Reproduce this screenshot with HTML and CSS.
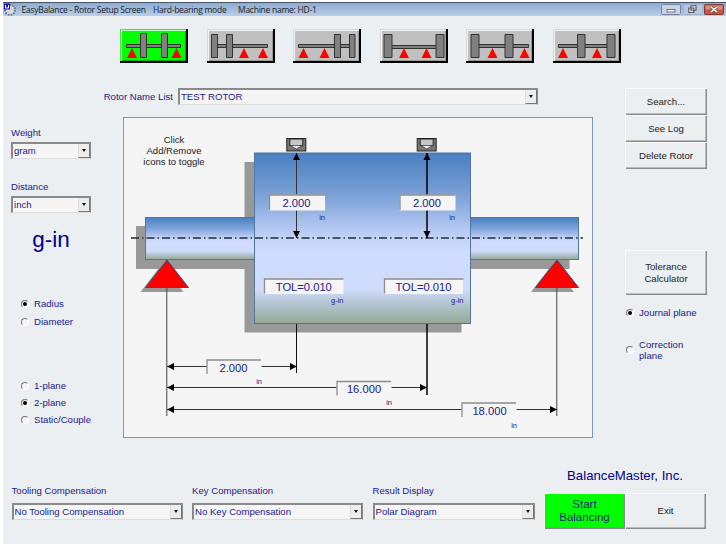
FILE: index.html
```
<!DOCTYPE html>
<html lang="en">
<head>
<meta charset="utf-8">
<title>EasyBalance - Rotor Setup Screen</title>
<link rel="stylesheet" href="styles.css">
</head>
<body>
<div class="window">
  <header class="titlebar">
    <svg class="app-icon" width="14" height="14" viewBox="0 0 14 14"><circle cx="7" cy="7" r="5" fill="#d4d8de" stroke="#5f6672" stroke-width="1.8" stroke-dasharray="1.5 1.3"/><rect x="1" y="0.5" width="6" height="6" fill="#1414b8"/><path d="M2.500 2v3h3v-3" fill="none" stroke="#fff"/></svg>
    <span class="t1">EasyBalance - Rotor Setup Screen</span>
    <span class="t2">Hard-bearing mode</span>
    <span class="t3">Machine name: HD-1</span>
    <div class="winbtns">
      <svg width="20" height="11" viewBox="0 0 20 11"><rect class="wb" x=".5" y=".5" width="19" height="10" rx="1"/><rect x="6" y="5.5" width="8" height="2.5" fill="#fff" stroke="#555" stroke-width=".8"/></svg>
      <svg width="20" height="11" viewBox="0 0 20 11"><rect class="wb faint" x=".5" y=".5" width="19" height="10" rx="1"/><path d="M8 1.8h5v4.500h-5zM5.800 4h5v4.500h-5z" fill="#e4eaf2" stroke="#555" stroke-width="1.1"/></svg>
      <svg width="20" height="11" viewBox="0 0 20 11"><rect x=".5" y=".5" width="19" height="10" rx="1" fill="#cb5540" stroke="#7c3b38"/><rect x="1.5" y="1.5" width="17" height="4" fill="#dc8c7c"/><path d="M7 3l6 5M13 3l-6 5" stroke="#694a4a" stroke-width="3"/><path d="M7 3l6 5M13 3l-6 5" stroke="#fff" stroke-width="1.6"/></svg>
    </div>
  </header>

  <nav class="configs">
    <button class="cfg on"><svg viewBox="0 0 68 34"><path class="s" d="M6.500 15.500h54v3h-54z"/><path class="d" d="M20.500 4.500h6v24h-6zM41.500 4.500h6v24h-6z"/><path class="t" d="M7 29h10l-5-10zM51.500 29h10l-5-10z"/></svg></button>
    <button class="cfg"><svg viewBox="0 0 68 34"><path class="s" d="M8 15.500h52.500v3h-52.500z"/><path class="d" d="M4.500 5.500h6v23h-6zM19.500 5.500h6v23h-6z"/><path class="t" d="M32 29h10l-5-10zM51 29h10l-5-10z"/></svg></button>
    <button class="cfg"><svg viewBox="0 0 68 34"><path class="s" d="M5.500 15.500h52v3h-52z"/><path class="d" d="M41.500 5.500h6v23h-6zM56.500 5.500h5.500v23h-5.500z"/><path class="t" d="M5.500 29h10l-5-10zM26.500 29h10l-5-10z"/></svg></button>
    <button class="cfg"><svg viewBox="0 0 68 34"><path class="s" d="M10 16.500h48v3h-48z"/><path class="d" d="M4 5.500h8v23h-8zM56 5.500h8v23h-8z"/><path class="t" d="M19 29h10l-5-10zM41.500 29h10l-5-10z"/></svg></button>
    <button class="cfg"><svg viewBox="0 0 68 34"><path class="s" d="M10 15.500h52.500v3h-52.500z"/><path class="d" d="M5 5.500h8v23h-8zM39 5.500h8v23h-8z"/><path class="t" d="M21.500 29h10l-5-10zM53.500 29h10l-5-10z"/></svg></button>
    <button class="cfg"><svg viewBox="0 0 68 34"><path class="s" d="M5.500 15.500h52v3h-52z"/><path class="d" d="M24.500 5.500h7.500v23h-7.500zM54 5.500h8v23h-8z"/><path class="t" d="M5 29h10l-5-10zM39 29h10l-5-10z"/></svg></button>
  </nav>

  <main class="main">
    <aside class="left">
      <label class="lbl">Weight</label>
      <div class="select"><span>gram</span><i></i></div>
      <label class="lbl second">Distance</label>
      <div class="select"><span>inch</span><i></i></div>
      <div class="unit">g-in</div>
      <div class="radios shape">
        <div class="radio on"><b></b>Radius</div>
        <div class="radio"><b></b>Diameter</div>
      </div>
      <div class="radios planes">
        <div class="radio"><b></b>1-plane</div>
        <div class="radio on"><b></b>2-plane</div>
        <div class="radio"><b></b>Static/Couple</div>
      </div>
    </aside>

    <section class="center">
      <div class="rotor-row">
        <label class="lbl">Rotor Name List</label>
        <div class="select"><span>TEST ROTOR</span><i></i></div>
      </div>
      <svg class="diagram" width="470" height="322" viewBox="123 117 470 322">
        <defs>
          <linearGradient id="metal" x1="0" y1="0" x2="0" y2="1">
            <stop offset="0" stop-color="#4a7fc0"/><stop offset=".25" stop-color="#7ba1d8"/><stop offset=".5" stop-color="#c4d3f8"/><stop offset=".58" stop-color="#d0dcff"/><stop offset=".8" stop-color="#cfdbfb"/><stop offset="1" stop-color="#93a896"/>
          </linearGradient>
          <filter id="soft"><feGaussianBlur stdDeviation=".7"/></filter>
          <marker id="arr" viewBox="0 0 8 8" refX="8" refY="4" markerWidth="8" markerHeight="8" markerUnits="userSpaceOnUse" orient="auto-start-reverse"><path d="M1 .5L8 4L1 7.500z"/></marker>
          <g id="sensor"><rect x=".5" y=".5" width="19" height="12.500" fill="#777" stroke="#222"/><path d="M3.500 1v6.500h3l3.500 3l3.500-3h3v-6.500z" fill="#c6c6c6" stroke="#222"/><path d="M4 7.500h12l-6 3.500z" fill="#eee" stroke="#333" stroke-width=".7"/></g>
        </defs>
        <rect x="123.500" y="117.500" width="469" height="320" fill="#f5f5f5" stroke="#7c96b9"/>
        <g class="lab"><text x="174" y="142.500">Click</text><text x="174" y="153.800">Add/Remove</text><text x="174" y="165">icons to toggle</text></g>
        <g fill="#999" filter="url(#soft)">
          <path d="M136 226h110v43h-110zM460 226h109.500v43h-109.500zM244.500 162h217v170.500h-217z"/>
          <path d="M162 264l21.500 28h-43zM552.500 264l21.500 28h-43z"/>
        </g>
        <g fill="url(#metal)" stroke="#4f76a5">
          <rect x="145.500" y="217.500" width="109" height="42"/><rect x="470.500" y="217.500" width="108" height="42"/>
          <rect x="254.500" y="153" width="216" height="170.500"/>
        </g>
        <path d="M131 238H583" stroke="#222b3a" stroke-width="1.500" stroke-dasharray="8 3 1.500 3" fill="none"/>
        <g fill="#f00" stroke="#334c78"><path d="M167 260l21.500 27.500h-43z"/><path d="M557 260l21.500 27.500h-43z"/></g>
        <use href="#sensor" x="286.300" y="138"/><use href="#sensor" x="416.700" y="138"/>
        <g stroke="#444" fill="none"><path d="M166.800 288V416M556.800 288V416"/><path d="M296.500 324V373" stroke="#111"/><path d="M427 324V395" stroke="#000" stroke-width="1.500"/></g>
        <g class="dim">
          <path d="M296.500 153V238"/>
          <path d="M427 153V238" stroke="#000" stroke-width="1.500"/>
          <path d="M167 366.500H297"/>
          <path d="M167 387.500H427"/>
          <path d="M167 409.500H557"/>
        </g>
        <g class="box">
          <rect x="269" y="194.500" width="56" height="16"/><rect x="399.500" y="194.500" width="56" height="16"/>
          <rect x="264" y="278.500" width="79.500" height="15.500"/><rect x="384" y="278.500" width="79" height="15.500"/>
          <rect x="206.500" y="359.500" width="55" height="15"/><rect x="336.500" y="381" width="55" height="15"/><rect x="461.500" y="402.500" width="55" height="15"/>
        </g>
        <path class="bevel" d="M269.500 210v-15h55.500M400 210v-15h55.500M264.500 293.500v-14.500h79M384.500 293.500v-14.500h79M207 374v-14h54M337 395.500v-14h54M462 417v-14h54"/>
        <g class="val">
          <text x="296.500" y="206.700">2.000</text><text x="427" y="206.700">2.000</text>
          <text x="303.800" y="290.500">TOL=0.010</text><text x="423.500" y="290.500">TOL=0.010</text>
          <text x="233.500" y="371.700">2.000</text><text x="364" y="393">16.000</text><text x="489.500" y="414.500">18.000</text>
        </g>
        <g class="small">
          <text x="325" y="219.500">in</text><text x="455" y="219.500">in</text><text x="343.500" y="303">g-in</text><text x="463.500" y="303">g-in</text>
          <text x="262" y="384">in</text><text x="392" y="405">in</text><text x="517" y="427.500">in</text>
        </g>
      </svg>
    </section>

    <aside class="right">
      <button class="btn">Search...</button>
      <button class="btn">See Log</button>
      <button class="btn">Delete Rotor</button>
      <button class="btn tall">Tolerance<br>Calculator</button>
      <div class="radio on"><b></b>Journal plane</div>
      <div class="radio two"><b></b><span>Correction<br>plane</span></div>
    </aside>
  </main>

  <footer class="footer">
    <div class="field"><label class="lbl">Tooling Compensation</label><div class="select"><span>No Tooling Compensation</span><i></i></div></div>
    <div class="field"><label class="lbl">Key Compensation</label><div class="select"><span>No Key Compensation</span><i></i></div></div>
    <div class="field last"><label class="lbl">Result Display</label><div class="select"><span>Polar Diagram</span><i></i></div></div>
    <div class="actions">
      <div class="brand">BalanceMaster, Inc.</div>
      <div class="pair"><button class="btn start">Start<br>Balancing</button><button class="btn exit">Exit</button></div>
    </div>
  </footer>
</div>
</body>
</html>
```
FILE: styles.css
```
* { box-sizing: border-box; }
body { margin: 0; background: #fff; font: 9.6px/12px "Liberation Sans", Arial, sans-serif; color: #20208c; }
.window { width: 723px; height: 542px; margin-left: 3px; margin-top: 2px; background: #eceff1; display: flex; flex-direction: column; overflow: hidden; }
button { font: inherit; padding: 0; border: 0; }
svg { display: block; }

.titlebar { height: 14px; flex: none; background: linear-gradient(#8fabce, #b9cfe9); border-top: 1px solid #46566c; display: flex; align-items: center; color: #151c28; font: 8.500px/12px "Open Sans", "Noto Sans", sans-serif; letter-spacing: -.25px; white-space: nowrap; }
.app-icon { width: 14px; margin-right: 4.500px; }
.t1 { width: 131.500px; }
.t2 { width: 85px; }
.winbtns { margin-left: auto; margin-right: 2px; display: flex; gap: 1.500px; }
.wb { fill: #c5d4e7; stroke: #71839e; }
.wb.faint { fill: #b4c9e3; stroke: #9db2cf; }

.configs { display: flex; gap: 18.600px; margin: 13px 0 0 117px; height: 34px; flex: none; }
.cfg { width: 68px; height: 34px; flex: none; background: #c0c0c0; box-shadow: inset -2px -2px #000, inset 1px 1px #d8d8d8, inset 2px 2px #f2f2f2, inset -3px -3px #9a9a9a; }
.cfg.on { background: #0f0; box-shadow: inset -2px -2px #000, inset 1px 1px #4be04b, inset 2px 2px #b8ffb8, inset -3px -3px #0a0; }
.s, .d { fill: #808080; stroke: #333; stroke-width: 1; }
.t { fill: #f00; }

.main { display: flex; margin-top: 25px; height: 351px; flex: none; }
.left { width: 80px; margin: 39px 32px 0 8px; }
.lbl { display: block; white-space: nowrap; line-height: 12px; }
.second { margin-top: 22px; }
.select { height: 17px; margin-top: 3px; background: #f5f5f5; border: 1px solid #8a8a8a; border-top-width: 2px; border-left-width: 2px; border-bottom-color: #ddd; display: flex; align-items: center; justify-content: space-between; padding-left: 1px; white-space: nowrap; }
.select i { width: 12px; height: 14px; background: #ededed; border-right: 1px solid #777; border-bottom: 1px solid #777; border-left: 1px solid #ddd; display: flex; align-items: center; justify-content: center; }
.select i::after { content: ""; border: 2.500px solid transparent; border-top: 3px solid #111; border-bottom: 0; }
.unit { font-size: 22.500px; line-height: 26px; margin-top: 14px; text-align: center; color: #000090; }
.radio { display: flex; align-items: center; height: 12px; white-space: nowrap; }
.radio b { width: 8px; height: 8px; flex: none; margin-right: 5px; border: 1px solid; border-color: #777 #fff #fff #777; border-radius: 50%; background: #f6f6f6; display: flex; align-items: center; justify-content: center; }
.radio.on b::after { content: ""; width: 4px; height: 4px; border-radius: 50%; background: #000; }
.radios { margin-left: 10px; }
.shape { margin-top: 45px; display: flex; flex-direction: column; gap: 6px; }
.planes { margin-top: 52px; display: flex; flex-direction: column; gap: 5px; }

.center { width: 470px; }
.rotor-row { display: flex; align-items: center; height: 17px; padding-right: 55px; justify-content: flex-end; gap: 5px; margin: 0 0 12px -30px; }
.rotor-row .select { width: 360px; margin: 0; flex: none; }
.diagram { width: 470px; height: 322px; }
.lab { font-size: 9.500px; fill: #222; text-anchor: middle; }
.dim path { fill: none; marker-start: url(#arr); marker-end: url(#arr); }
.dim { stroke: #333; }
.box { fill: #f5f5f5; }
.bevel { fill: none; stroke: #8c8c8c; stroke-width: 1.300; }
.val { font-size: 11.200px; fill: #20208c; text-anchor: middle; }
.small { font-size: 7.500px; fill: #20208c; text-anchor: end; }

.right { width: 82px; margin-left: 32px; }
.btn { display: block; width: 82px; height: 27px; background: #eceff1; color: #222; line-height: 11.500px; box-shadow: inset 1px 1px #fafafa, inset -1.500px -1.500px #8a8a8a; }
.btn.tall { height: 45px; margin: 81px 0 12px; }
.right .radio { margin-left: 1px; }
.right .two { margin-top: 19px; height: 23px; line-height: 11px; }

.footer { display: flex; align-items: flex-start; padding-left: 8.500px; margin-top: 28px; }
.field { width: 171px; margin: 17.500px 9.500px 0 0; }
.field .select { margin-top: 6.500px; }
.field.last { width: 162px; margin-right: 9.500px; }
.brand { font-size: 13.200px; line-height: 16px; text-align: center; color: #000090; padding-top: 1px; }
.pair { display: flex; margin-top: 9px; }
.pair .btn { height: 36px; width: 81px; }
.pair .start { background: #0f0; color: #1c2a70; font-size: 11.500px; line-height: 13.500px; }
```
